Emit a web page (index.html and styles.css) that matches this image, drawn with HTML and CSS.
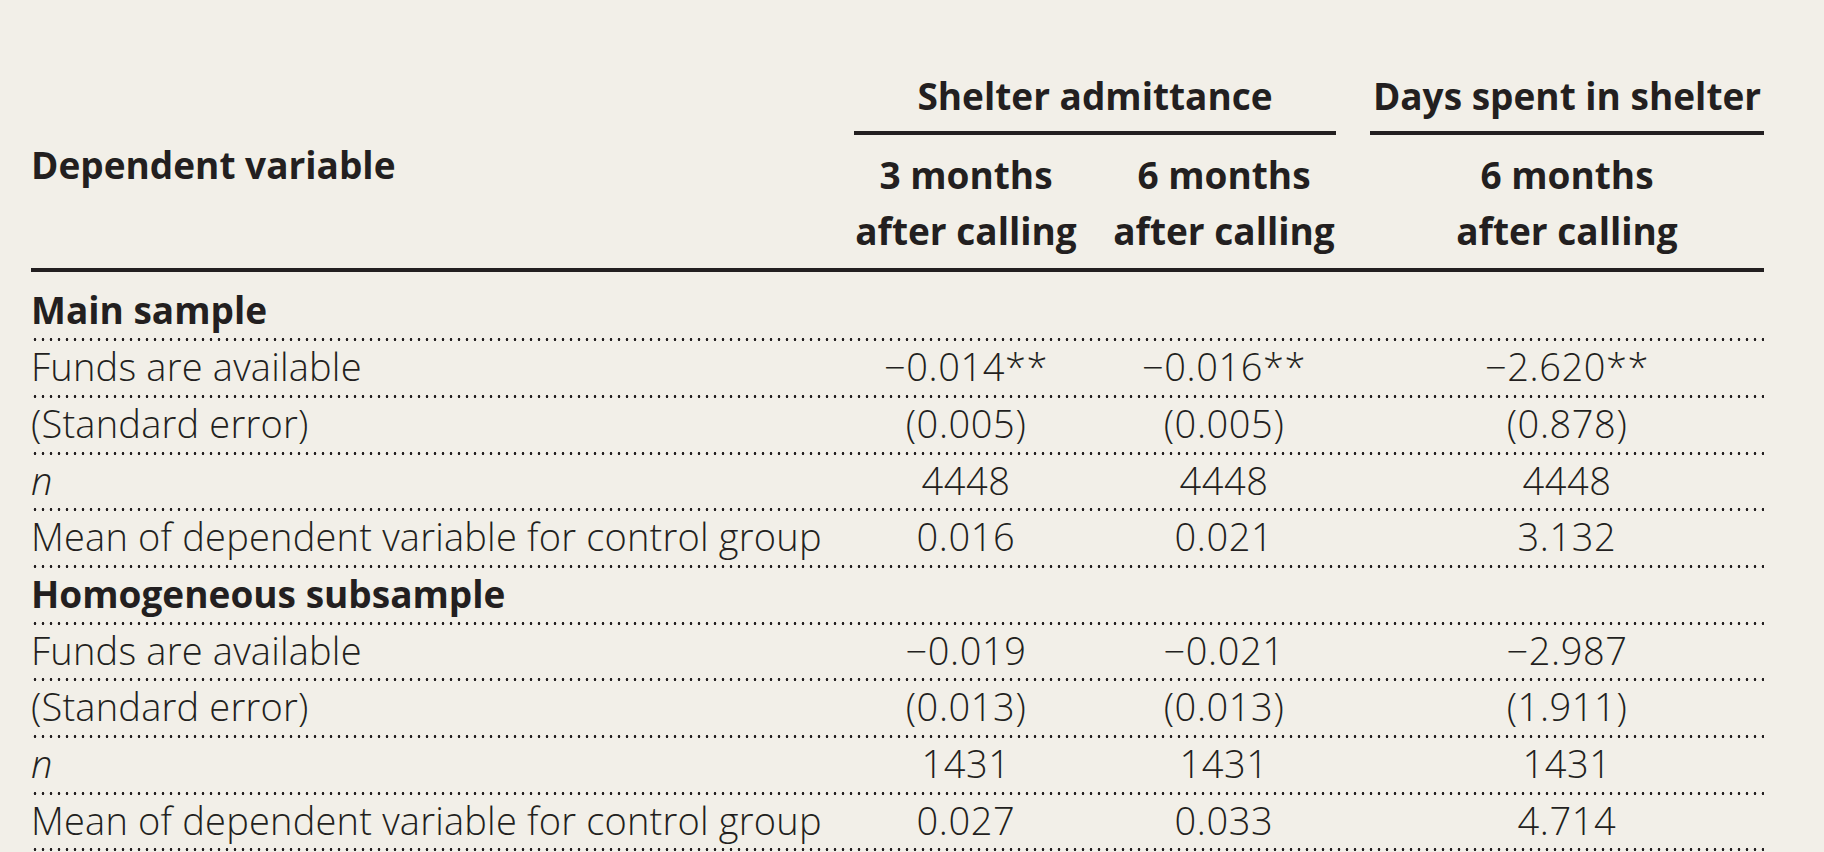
FILE: index.html
```html
<!DOCTYPE html>
<html lang="en">
<head>
<meta charset="utf-8">
<title>Shelter table</title>
<link rel="stylesheet" href="styles.css">
</head>
<body>
<div class="table">
  <div class="head">
    <div class="dep">Dependent variable</div>
    <div class="group g1">Shelter admittance</div>
    <div class="group g2">Days spent in shelter</div>
    <div class="sub c1">3 months<br>after calling</div>
    <div class="sub c2">6 months<br>after calling</div>
    <div class="sub c3">6 months<br>after calling</div>
  </div>

  <div class="row section first"><div class="label">Main sample</div></div>
  <div class="row"><div class="label">Funds are available</div><div class="num">−0.014<span class="ast">**</span></div><div class="num">−0.016<span class="ast">**</span></div><div class="num">−2.620<span class="ast">**</span></div></div>
  <div class="row"><div class="label">(Standard error)</div><div class="num">(0.005)</div><div class="num">(0.005)</div><div class="num">(0.878)</div></div>
  <div class="row"><div class="label"><i>n</i></div><div class="num">4448</div><div class="num">4448</div><div class="num">4448</div></div>
  <div class="row"><div class="label">Mean of dependent variable for control group</div><div class="num">0.016</div><div class="num">0.021</div><div class="num">3.132</div></div>

  <div class="row section"><div class="label">Homogeneous subsample</div></div>
  <div class="row"><div class="label">Funds are available</div><div class="num">−0.019</div><div class="num">−0.021</div><div class="num">−2.987</div></div>
  <div class="row"><div class="label">(Standard error)</div><div class="num">(0.013)</div><div class="num">(0.013)</div><div class="num">(1.911)</div></div>
  <div class="row"><div class="label"><i>n</i></div><div class="num">1431</div><div class="num">1431</div><div class="num">1431</div></div>
  <div class="row"><div class="label">Mean of dependent variable for control group</div><div class="num">0.027</div><div class="num">0.033</div><div class="num">4.714</div></div>
</div>
</body>
</html>
```

FILE: styles.css
```css
html, body {
  margin: 0;
  padding: 0;
}
body {
  background: #f2efe8;
  color: #231f20;
  font-family: "Open Sans", "Liberation Sans", sans-serif;
  font-size: 37px;
  overflow: hidden;
}
.table {
  width: 1733px;
  margin-left: 31px;
  padding-top: 67.6px;
}
.head, .row {
  display: grid;
  grid-template-columns: 789px 224px 224px 394px;
  column-gap: 34px;
}
.head {
  font-weight: 700;
  line-height: 56px;
  text-align: center;
  border-bottom: 4px solid #231f20;
  padding-bottom: 9px;
  grid-template-rows: auto auto;
}
.dep {
  grid-column: 1;
  grid-row: 1 / 3;
  align-self: center;
  text-align: left;
  margin-top: 3px;
}
.group {
  grid-row: 1;
  padding-bottom: 7.4px;
  border-bottom: 4px solid #231f20;
  white-space: nowrap;
}
.g1 { grid-column: 2 / 4; }
.g2 { grid-column: 4; }
.sub {
  grid-row: 2;
  margin-top: 11.6px;
  white-space: nowrap;
}
.c1 { grid-column: 2; }
.c2 { grid-column: 3; }
.c3 { grid-column: 4; }

.row {
  box-sizing: border-box;
  height: 56.7px;
  line-height: 51px;
  padding-bottom: 5.7px;
  font-weight: 300;
  font-size: 38px;
  letter-spacing: 0.2px;
  background: radial-gradient(circle at center, #231f20 1.1px, rgba(35,31,32,0) 1.6px) left bottom / 8px 3px repeat-x;
}
.row.first {
  margin-top: 12.9px;
}
.section {
  font-weight: 700;
  font-size: 37px;
  letter-spacing: 0;
}
.label {
  white-space: nowrap;
}
.num {
  text-align: center;
  white-space: nowrap;
  letter-spacing: 0.6px;
}
```
